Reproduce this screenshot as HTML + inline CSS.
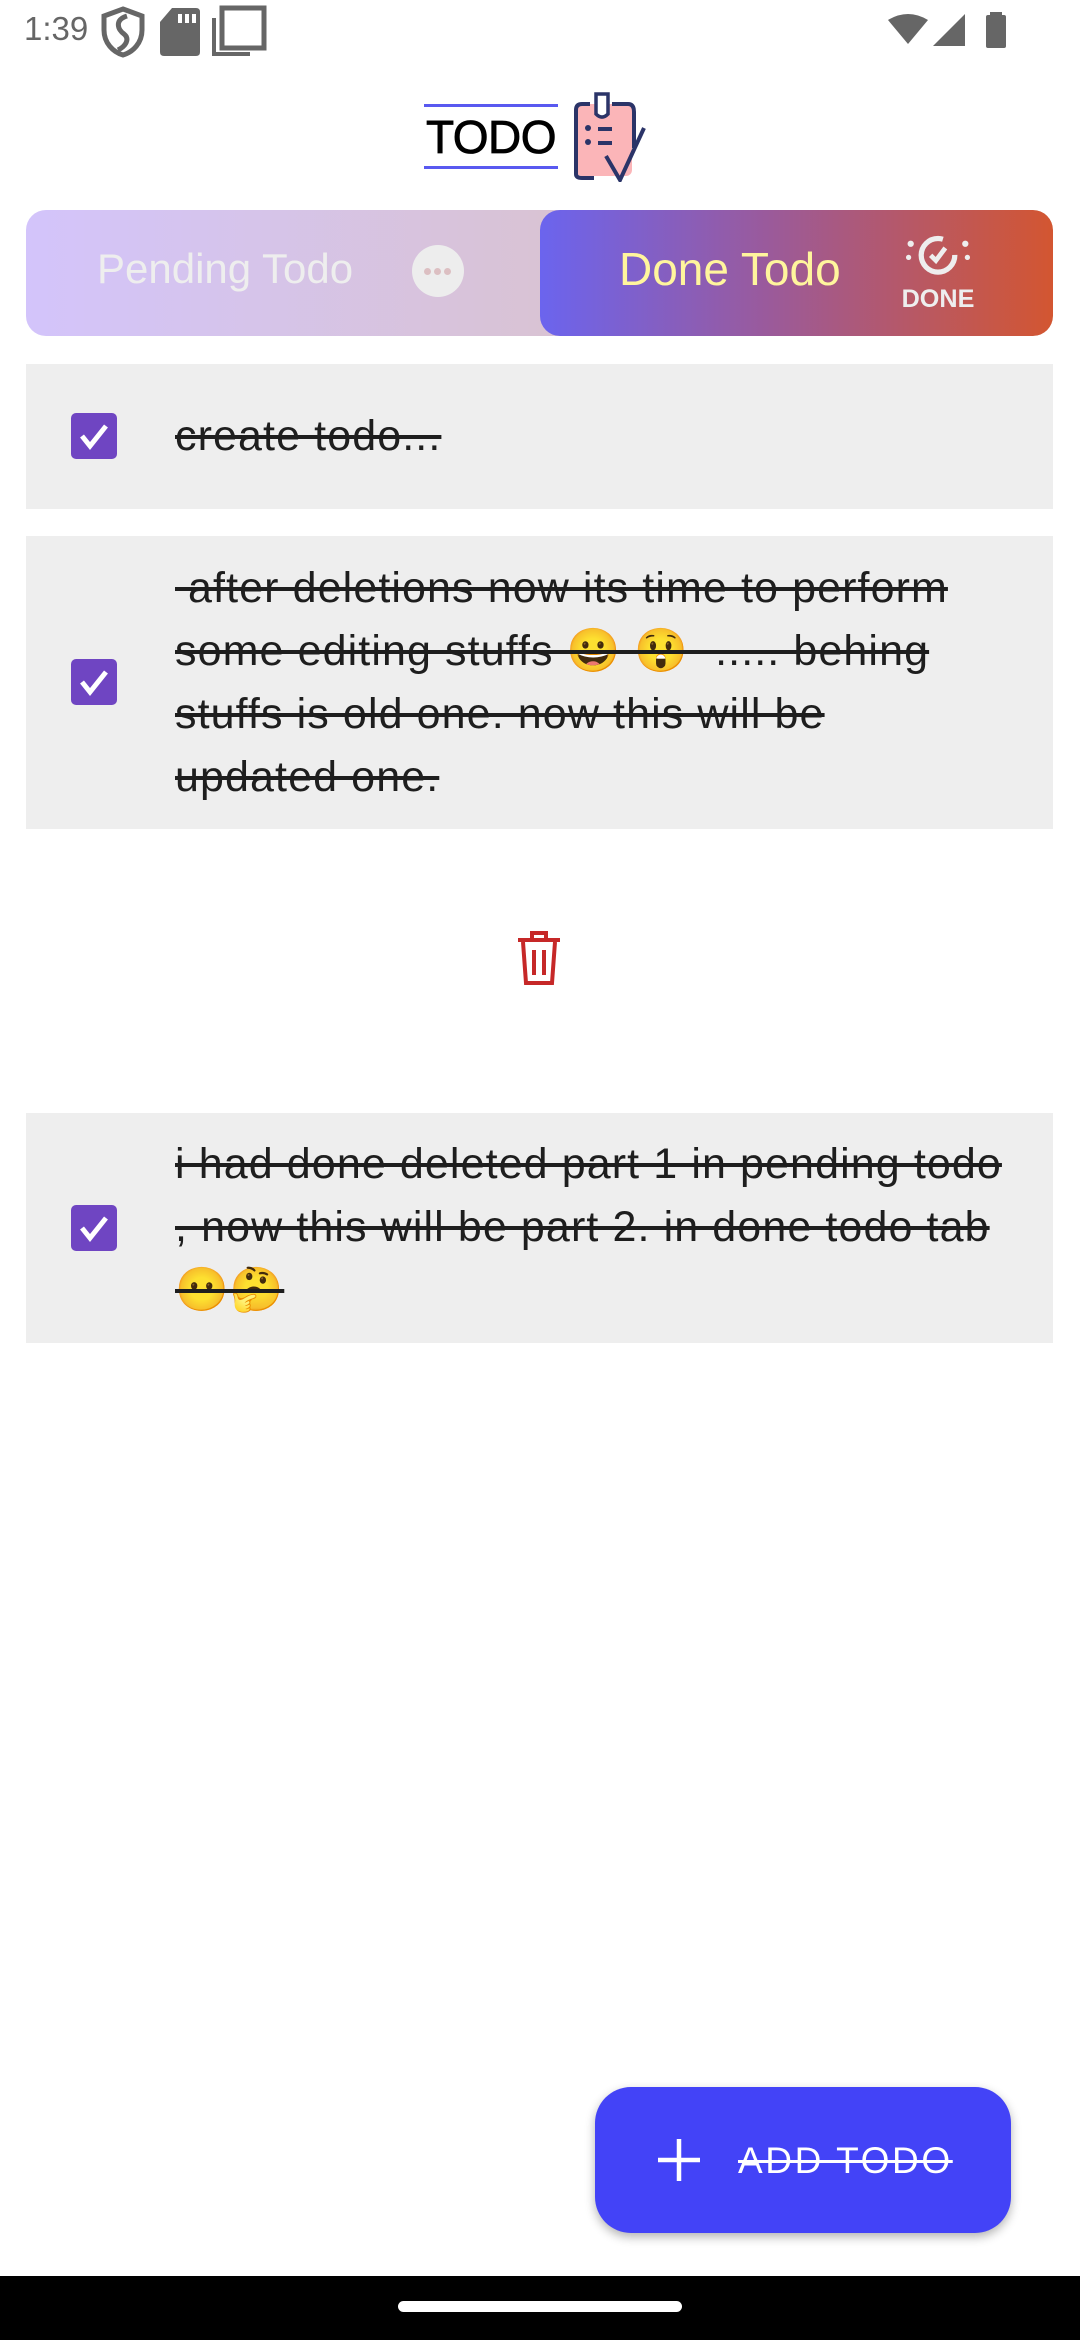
<!DOCTYPE html>
<html><head><meta charset="utf-8"><style>
*{margin:0;padding:0;box-sizing:border-box}
body{width:1080px;height:2340px;background:#fff;position:relative;overflow:hidden;font-family:"Liberation Sans",sans-serif}
.abs{position:absolute}
.card{position:absolute;left:26px;width:1027px;background:#eeeeee}
.cb{position:absolute;left:71px;width:46px;height:46px;background:#6f45c2;border-radius:5px}
.ln{position:absolute;left:175px;height:63px;font-size:43px;line-height:63px;color:#1e1e1e;text-decoration:line-through;white-space:nowrap;letter-spacing:1.1px}
</style></head><body>
<!-- status bar -->
<div class="abs" style="left:24px;top:10px;font-size:33px;color:#666">1:39</div>
<svg class="abs" style="left:100px;top:6px" width="46" height="52" viewBox="0 0 46 52"><path d="M23 3 L42 10 V24 C42 37 33 46 23 49 C13 46 4 37 4 24 V10 Z" fill="none" stroke="#666" stroke-width="5"/><path d="M27 10 C14 14 18 24 24 28 C30 33 26 40 18 44" fill="none" stroke="#666" stroke-width="5"/></svg>
<svg class="abs" style="left:158px;top:6px" width="44" height="52" viewBox="0 0 44 52"><path d="M14 2 H38 Q42 2 42 6 V46 Q42 50 38 50 H6 Q2 50 2 46 V16 Z" fill="#666"/><rect x="20" y="8" width="4" height="9" fill="#fff"/><rect x="27" y="8" width="4" height="9" fill="#fff"/><rect x="34" y="8" width="4" height="9" fill="#fff"/></svg>
<svg class="abs" style="left:210px;top:4px" width="58" height="54" viewBox="0 0 58 54"><rect x="12" y="4" width="42" height="40" fill="none" stroke="#666" stroke-width="5"/><path d="M4 14 V50 H40" fill="none" stroke="#666" stroke-width="4"/></svg>
<svg class="abs" style="left:888px;top:14px" width="40" height="32" viewBox="0 0 40 32"><path d="M20 30 L0 6 Q20 -6 40 6 Z" fill="#666"/></svg>
<svg class="abs" style="left:933px;top:14px" width="32" height="32"><path d="M32 0 V32 H0 Z" fill="#666"/></svg>
<svg class="abs" style="left:985px;top:12px" width="22" height="36"><rect x="5" y="0" width="12" height="4" fill="#666"/><rect x="1" y="3" width="20" height="33" rx="2" fill="#666"/></svg>

<!-- logo -->
<div class="abs" style="left:424px;top:104px;width:134px;height:3px;background:#5959f0"></div>
<div class="abs" style="left:424px;top:166px;width:134px;height:3px;background:#5959f0"></div>
<div class="abs" style="left:426px;top:110px;font-size:46px;color:#000;letter-spacing:-0.5px;-webkit-text-stroke:0.8px #000">TODO</div>
<svg class="abs" style="left:570px;top:90px" width="84" height="92" viewBox="0 0 84 92"><rect x="6" y="14" width="56" height="72" rx="6" fill="#fbb5b8"/><path d="M6 20 Q6 14 12 14 H20 M42 14 H58 Q64 14 64 22 V58 M6 20 V84 Q6 88 12 88 H24" fill="none" stroke="#2b3468" stroke-width="4"/><path d="M26 4 H38 V24 Q32 30 26 24 Z" fill="#fff" stroke="#2b3468" stroke-width="3.5"/><circle cx="18" cy="38" r="3" fill="#2b3468"/><circle cx="18" cy="52" r="3" fill="#2b3468"/><path d="M28 39 H42 M28 53 H42" stroke="#2b3468" stroke-width="4"/><path d="M36 66 L50 90 L74 38" fill="none" stroke="#2b3468" stroke-width="4"/></svg>

<!-- tabs -->
<div class="abs" style="left:26px;top:210px;width:1027px;height:126px;border-radius:20px;background:linear-gradient(90deg,#d3c4fb,#dfc2ae);overflow:hidden">
 <div class="abs" style="left:514px;top:0;width:513px;height:126px;border-radius:20px;background:linear-gradient(90deg,#6b64ee,#9b5a9a 45%,#d35631)"></div>
</div>
<div class="abs" style="left:97px;top:245px;font-size:42px;color:#eeeeee">Pending Todo</div>
<div class="abs" style="left:412px;top:245px;width:52px;height:52px;border-radius:50%;background:#ededed"></div>
<div class="abs" style="left:424px;top:268px;width:7px;height:7px;border-radius:50%;background:#dcbfc2;box-shadow:10px 0 #dcbfc2,20px 0 #dcbfc2"></div>
<div class="abs" style="left:619px;top:242px;font-size:46px;color:#fff59d">Done Todo</div>
<svg class="abs" style="left:896px;top:228px" width="84" height="84" viewBox="0 0 76 80"><circle cx="38" cy="26" r="16" fill="none" stroke="#eee" stroke-width="5" stroke-dasharray="80 20"/><path d="M31 26 L36 31 L45 19" fill="none" stroke="#eee" stroke-width="4.5"/><circle cx="12" cy="15" r="3" fill="#eee"/><circle cx="64" cy="15" r="3" fill="#eee"/><circle cx="10" cy="28" r="2.5" fill="#eee"/><circle cx="66" cy="28" r="2.5" fill="#eee"/><text x="38" y="75" text-anchor="middle" font-family="Liberation Sans" font-weight="bold" font-size="24" fill="#eee">DONE</text></svg>

<!-- card 1 -->
<div class="card" style="top:364px;height:145px"></div>
<div class="cb" style="top:413px"></div>
<svg class="abs" style="left:71px;top:413px" width="46" height="46"><path d="M11 23 L19 33 L35 13" fill="none" stroke="#fff" stroke-width="5"/></svg>
<div class="ln" style="top:405px">create todo...</div>

<!-- card 2 -->
<div class="card" style="top:536px;height:293px"></div>
<div class="cb" style="top:659px"></div>
<svg class="abs" style="left:71px;top:659px" width="46" height="46"><path d="M11 23 L19 33 L35 13" fill="none" stroke="#fff" stroke-width="5"/></svg>
<div class="ln" style="top:557px">&nbsp;after deletions now its time to perform</div>
<div class="ln" style="top:620px">some editing stuffs 😀 😲 &nbsp;..... behing</div>
<div class="ln" style="top:683px">stuffs is old one. now this will be</div>
<div class="ln" style="top:746px">updated one.</div>

<!-- trash -->
<svg class="abs" style="left:514px;top:928px" width="50" height="60" viewBox="0 0 50 60"><path d="M4 12 H46 M18 12 V5 H32 V12 M9 14 L12 55 H38 L41 14 M20 22 V47 M30 22 V47" fill="none" stroke="#c62828" stroke-width="4"/></svg>

<!-- card 3 -->
<div class="card" style="top:1113px;height:230px"></div>
<div class="cb" style="top:1205px"></div>
<svg class="abs" style="left:71px;top:1205px" width="46" height="46"><path d="M11 23 L19 33 L35 13" fill="none" stroke="#fff" stroke-width="5"/></svg>
<div class="ln" style="top:1133px">i had done deleted part 1 in pending todo</div>
<div class="ln" style="top:1196px">, now this will be part 2. in done todo tab</div>
<div class="ln" style="top:1259px">😶🤔</div>

<!-- FAB -->
<div class="abs" style="left:595px;top:2087px;width:416px;height:146px;border-radius:36px;background:#4343f7;box-shadow:0 4px 10px rgba(0,0,0,0.3)"></div>
<svg class="abs" style="left:656px;top:2137px" width="46" height="46"><path d="M23 2 V44 M2 23 H44" stroke="#fff" stroke-width="4.5"/></svg>
<div class="abs" style="left:738px;top:2140px;font-size:37px;color:#fff;text-decoration:line-through;letter-spacing:2.6px">ADD TODO</div>

<!-- nav bar -->
<div class="abs" style="left:0;top:2276px;width:1080px;height:64px;background:#000"></div>
<div class="abs" style="left:398px;top:2301px;width:284px;height:11px;border-radius:6px;background:#fff"></div>
</body></html>
